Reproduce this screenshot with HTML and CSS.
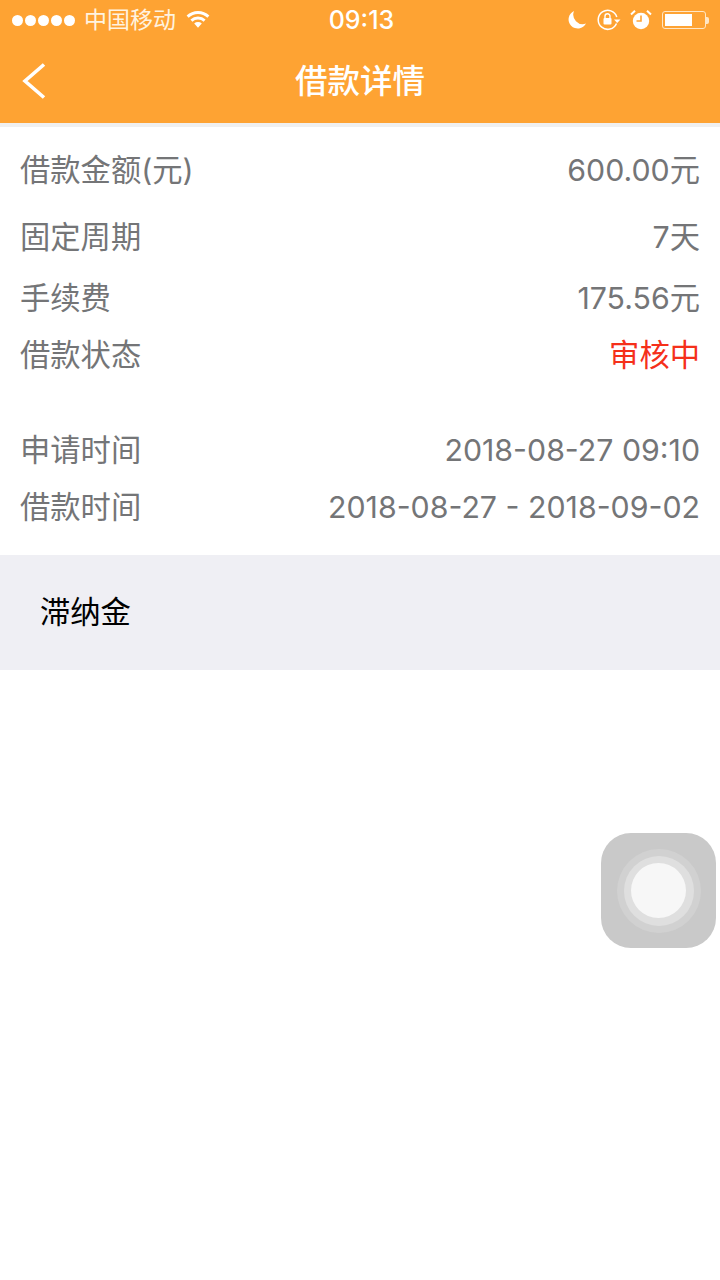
FILE: index.html
```html
<!DOCTYPE html>
<html>
<head>
  <title>借款详情</title>
  <meta name="viewport" content="width=device-width, initial-scale=1.0">
  <link rel="stylesheet" href="styles.css">
</head>
<body>
  <div class="header">
    <div class="status-bar">
      <div class="status-left">
        <div class="signal">
          <span class="dot"></span><span class="dot"></span><span class="dot"></span><span class="dot"></span><span class="dot"></span>
        </div>
        <span class="carrier">中国移动</span>
        <svg class="wifi" viewBox="0 0 24 18" width="24" height="18">
          <path d="M0.6 5.6 A16.5 16.5 0 0 1 23.4 5.6 L21.4 7.8 A13.5 13.5 0 0 0 2.6 7.8 Z" fill="#fff"/>
          <path d="M4.4 9.6 A11 11 0 0 1 19.6 9.6 L17.6 11.8 A8 8 0 0 0 6.4 11.8 Z" fill="#fff"/>
          <path d="M8.2 13.6 A5.6 5.6 0 0 1 15.8 13.6 L12 17.8 Z" fill="#fff"/>
        </svg>
      </div>
      <div class="clock">09:13</div>
      <div class="status-right">
        <svg class="moon" viewBox="0 0 20 20" width="20" height="20">
          <path d="M7 1 A9.2 9.2 0 1 0 19 13.5 A9.5 9.5 0 0 1 7 1 Z" fill="#fff"/>
        </svg>
        <svg class="lock" viewBox="0 0 24 22" width="24" height="22">
          <path d="M19.5 14.5 A9.5 9.5 0 1 1 19.8 8" fill="none" stroke="#fff" stroke-width="1.5"/>
          <path d="M17 10.5 H23.5 L20.2 14 Z" fill="#fff"/>
          <rect x="6.5" y="9" width="8" height="6.5" rx="1" fill="#fff"/>
          <path d="M8 9 V7.2 A2.5 2.5 0 0 1 13 7.2 V9" fill="none" stroke="#fff" stroke-width="1.4"/>
        </svg>
        <svg class="alarm" viewBox="0 0 22 22" width="22" height="22">
          <circle cx="11" cy="12" r="8.2" fill="#fff"/>
          <path d="M11 6.5 V12 H6.5" fill="none" stroke="#ffa434" stroke-width="1.6"/>
          <path d="M1 5.5 L5 1.8 M21 5.5 L17 1.8" stroke="#fff" stroke-width="2"/>
        </svg>
        <div class="battery">
          <div class="battery-body"><div class="battery-fill"></div></div>
          <div class="battery-tip"></div>
        </div>
      </div>
    </div>
    <div class="nav-bar">
      <svg class="back" viewBox="0 0 28 38" width="28" height="38">
        <path d="M24 2.5 L5 19 L24 35.5" fill="none" stroke="#fff" stroke-width="3.6"/>
      </svg>
      <div class="nav-title">借款详情</div>
    </div>
  </div>
  <div class="strip"></div>

  <div class="details">
    <div class="row row-amount"><span>借款金额(元)</span><span>600.00元</span></div>
    <div class="row row-cycle"><span>固定周期</span><span>7天</span></div>
    <div class="row row-fee"><span>手续费</span><span>175.56元</span></div>
    <div class="row row-state"><span>借款状态</span><span class="state-text">审核中</span></div>
    <div class="row row-apply"><span>申请时间</span><span>2018-08-27 09:10</span></div>
    <div class="row row-loan"><span>借款时间</span><span>2018-08-27 - 2018-09-02</span></div>
  </div>

  <div class="late-fee">滞纳金</div>

  <div class="assistive">
    <div class="ring-outer">
      <div class="ring-inner">
        <div class="knob"></div>
      </div>
    </div>
  </div>
</body>
</html>
```

FILE: styles.css
```css
body {
  font-family: Inter, "Noto Sans CJK SC", sans-serif;
  background-color: white;
  margin: 0;
  padding: 0;
  min-height: 1280px;
  position: relative;
  overflow: hidden;
  color: #747577;
}
.header {
  background-color: #fea333;
  height: 123px;
  color: white;
}
.status-bar {
  height: 40px;
  display: flex;
  align-items: center;
  justify-content: space-between;
  padding: 0 12px;
  position: relative;
}
.status-left {
  display: flex;
  align-items: center;
}
.signal {
  display: flex;
  gap: 2px;
}
.dot {
  width: 11px;
  height: 11px;
  border-radius: 50%;
  background-color: white;
}
.carrier {
  font-size: 23px;
  line-height: 30px;
  margin-left: 9px;
  color: #fff3e0;
}
.wifi {
  margin-left: 10px;
  margin-top: -2px;
}
.clock {
  position: absolute;
  left: 3px;
  right: 0;
  text-align: center;
  font-size: 25px;
  font-weight: 500;
}
.status-right {
  display: flex;
  align-items: center;
  margin-right: -1px;
}
.moon {
  margin-right: 10px;
}
.lock {
  margin-right: 9px;
}
.alarm {
  margin-right: 10px;
}
.battery {
  display: flex;
  align-items: center;
}
.battery-body {
  width: 44px;
  height: 18px;
  border: 1px solid #ffe6c4;
  border-radius: 3px;
  padding: 2px;
  box-sizing: border-box;
}
.battery-fill {
  width: 27px;
  height: 100%;
  background-color: white;
}
.battery-tip {
  width: 3px;
  height: 7px;
  background-color: #ffe6c4;
  border-radius: 0 2px 2px 0;
}
.nav-bar {
  height: 77px;
  padding-bottom: 6px;
  display: flex;
  align-items: center;
  justify-content: center;
  position: relative;
}
.back {
  position: absolute;
  left: 20px;
  top: 22px;
}
.nav-title {
  font-size: 32.5px;
  font-weight: 500;
}
.strip {
  height: 4px;
  background-color: #f0f0f0;
}
.details {
  padding: 23px 20px 28px;
}
.row {
  display: flex;
  justify-content: space-between;
  font-size: 30.3px;
  line-height: 40px;
}
.row-cycle {
  margin-top: 27px;
}
.row-fee {
  margin-top: 21px;
}
.row-state {
  margin-top: 17px;
}
.row-apply {
  margin-top: 55px;
}
.row-loan {
  margin-top: 17px;
}
.state-text {
  color: #f5301a;
}
.late-fee {
  background-color: #efeff4;
  height: 115px;
  line-height: 115px;
  padding-left: 40px;
  font-size: 30.3px;
  color: black;
}
.assistive {
  position: absolute;
  left: 601px;
  top: 833px;
  width: 115px;
  height: 115px;
  border-radius: 30px;
  background-color: #c9c9c9;
  display: flex;
  align-items: center;
  justify-content: center;
}
.ring-outer {
  width: 84px;
  height: 84px;
  border-radius: 50%;
  background-color: #d1d1d1;
  display: flex;
  align-items: center;
  justify-content: center;
}
.ring-inner {
  width: 70px;
  height: 70px;
  border-radius: 50%;
  background-color: #dfdfdf;
  display: flex;
  align-items: center;
  justify-content: center;
}
.knob {
  width: 55px;
  height: 55px;
  border-radius: 50%;
  background-color: #f7f7f7;
}
```
